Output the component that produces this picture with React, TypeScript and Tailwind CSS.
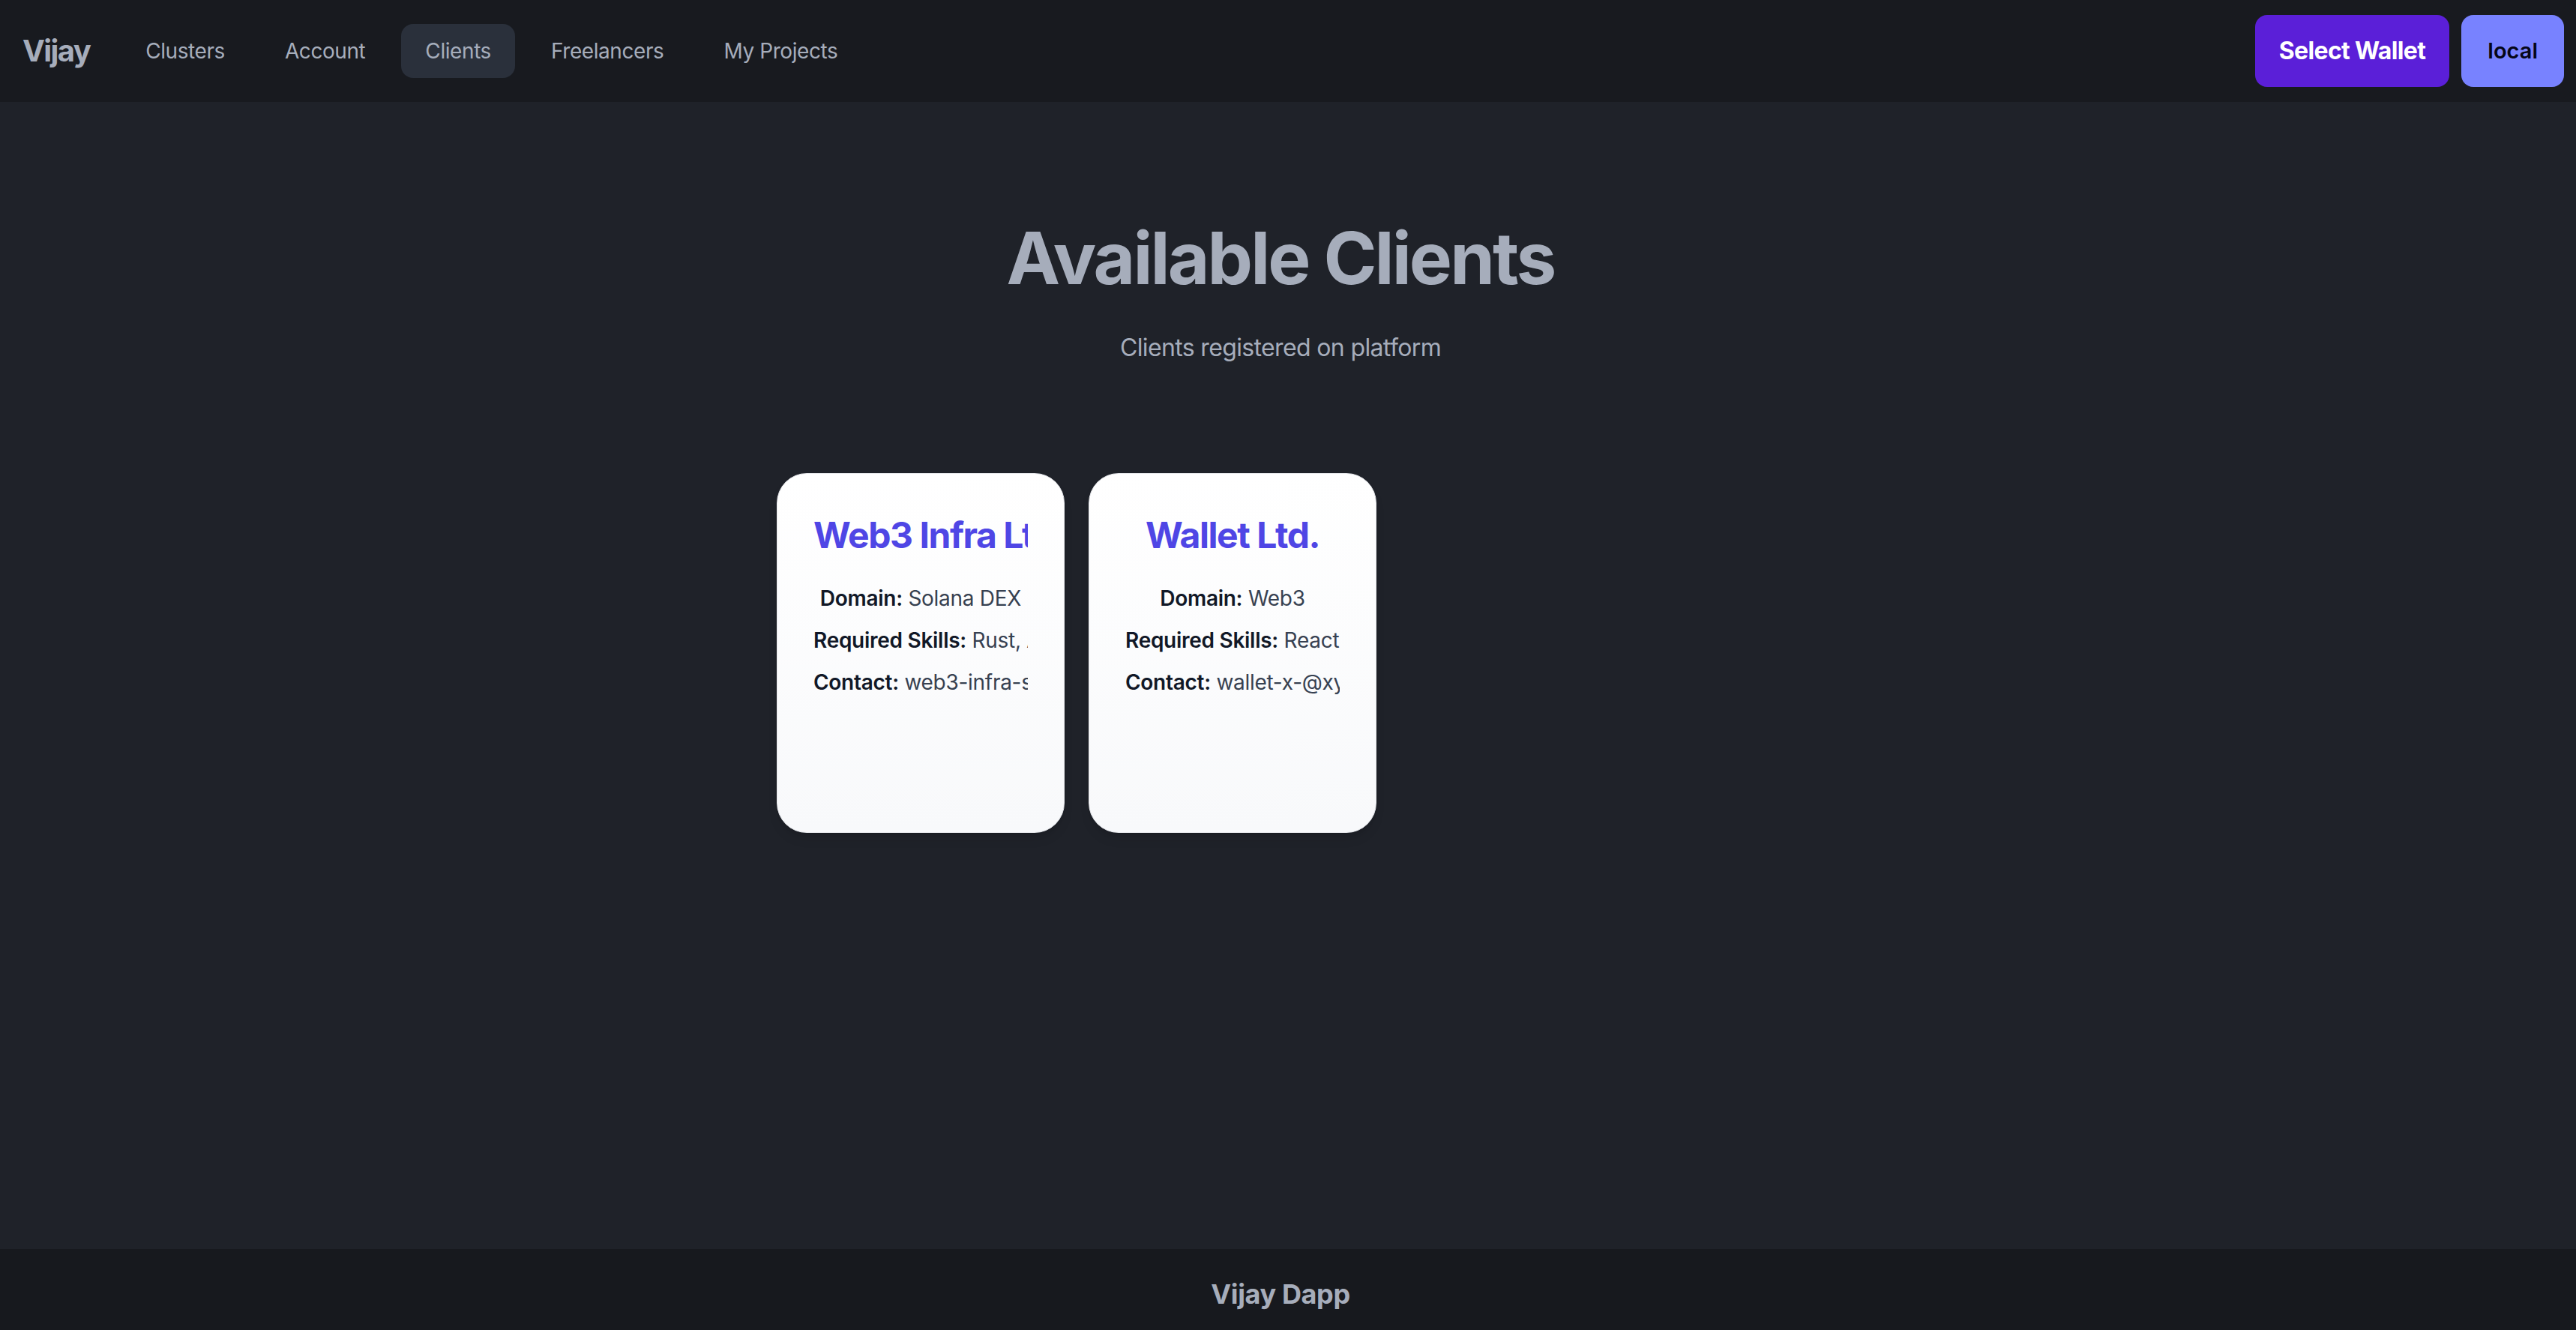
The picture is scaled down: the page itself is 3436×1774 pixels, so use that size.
import React from 'react';

const clients = [
  {
    name: 'Web3 Infra Ltd.',
    domain: 'Solana DEX',
    skills: 'Rust, Anchor, TypeScript',
    contact: 'web3-infra-support@xyz.com',
  },
  {
    name: 'Wallet Ltd.',
    domain: 'Web3',
    skills: 'React, Solana Web3.js',
    contact: 'wallet-x-@xyz.com',
  },
];

const links = ['Clusters', 'Account', 'Clients', 'Freelancers', 'My Projects'];

export default function App() {
  return (
    <div className="flex min-h-[1786px] flex-col bg-[#1f2229] font-['Inter',sans-serif] text-[#a6adbb]">
      {/* navbar */}
      <nav className="flex h-[136px] items-center justify-between bg-[#181a1f] px-[16px]">
        <div className="flex items-center">
          <a className="px-[14px] text-[40px] font-bold leading-[56px] tracking-[-0.04em]">Vijay</a>
          <ul className="ml-[28px] flex items-center gap-[16px]">
            {links.map((l) => (
              <li
                key={l}
                className={
                  'rounded-[16px] px-[32px] py-[16px] text-[28px] leading-[40px] tracking-[-0.015em] ' +
                  (l === 'Clients' ? 'bg-[#2a303b]' : '')
                }
              >
                {l}
              </li>
            ))}
          </ul>
        </div>
        <div className="flex items-center gap-[16px]">
          <button className="h-[96px] rounded-[16px] bg-[#5b1fd8] px-[32px] text-[32px] font-bold tracking-[-0.02em] text-white">
            Select Wallet
          </button>
          <button className="h-[96px] rounded-[16px] bg-[#7882ff] px-[35px] text-[29px] font-semibold text-[#050617]">
            local
          </button>
        </div>
      </nav>

      {/* body */}
      <main className="flex-1 pr-[20px]">
        <div className="mx-auto max-w-[1344px] pt-[160px] text-center">
          <h1 className="text-[96px] font-bold leading-none tracking-[-0.03em]">Available Clients</h1>
          <p className="mt-[48px] text-[32px] leading-[48px] tracking-[-0.02em]">
            Clients registered on platform
          </p>

          <div className="mt-[143px] flex gap-[32px]">
            {clients.map((c) => (
              <div
                key={c.name}
                className="h-[480px] w-[384px] rounded-[40px] border border-gray-200 bg-gradient-to-b from-white to-[#f8f9fb] px-[48px] pt-[50px] text-center shadow-lg"
              >
                <h2 className="mb-[32px] overflow-hidden whitespace-nowrap text-[48px] font-bold leading-[64px] tracking-[-0.03em] text-[#4f46e5]">
                  {c.name}
                </h2>
                <div className="flex flex-col gap-[16px] text-[28px] leading-[40px] tracking-[-0.01em]">
                  <p className="overflow-hidden whitespace-nowrap text-[#374151]">
                    <span className="font-semibold text-[#111827]">Domain:</span> {c.domain}
                  </p>
                  <p className="overflow-hidden whitespace-nowrap text-[#374151]">
                    <span className="font-semibold text-[#111827]">Required Skills:</span> {c.skills}
                  </p>
                  <p className="overflow-hidden whitespace-nowrap text-[#374151]">
                    <span className="font-semibold text-[#111827]">Contact:</span> {c.contact}
                  </p>
                </div>
              </div>
            ))}
          </div>
        </div>
      </main>

      {/* footer */}
      <footer className="bg-[#17191e] py-[32px] pr-[20px] text-center text-[36px] font-bold leading-[56px] tracking-[-0.01em]">
        Vijay Dapp
      </footer>
    </div>
  );
}
